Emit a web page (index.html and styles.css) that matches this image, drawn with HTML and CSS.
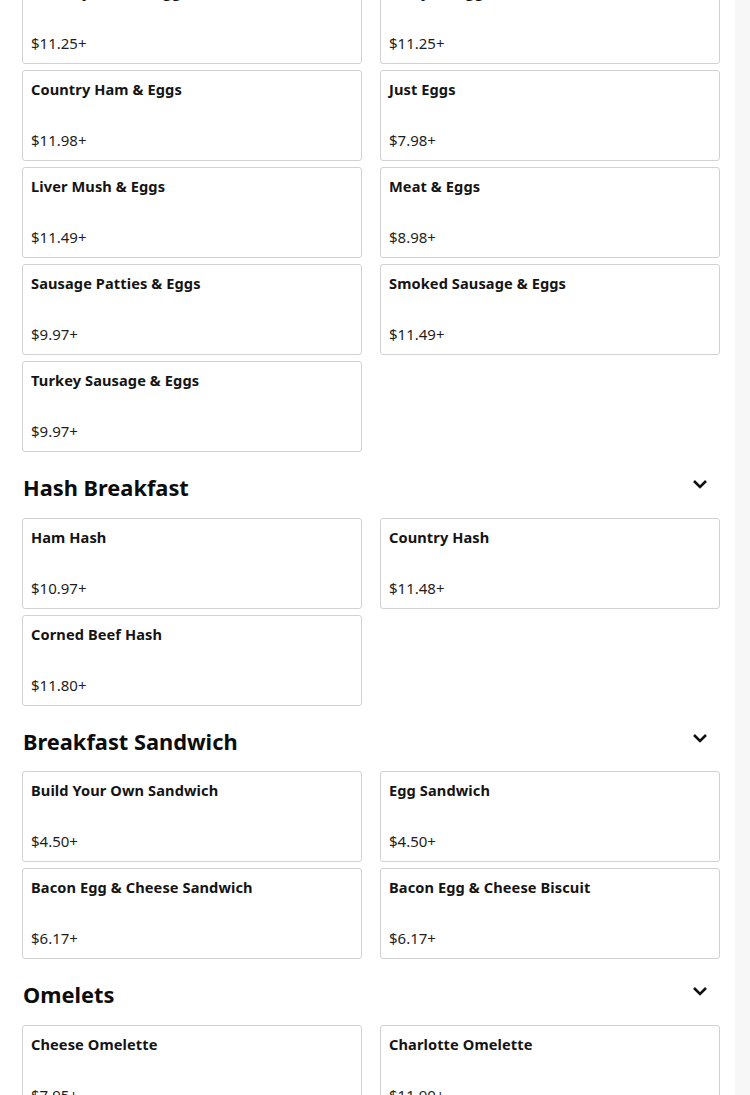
FILE: index.html
```html
<!DOCTYPE html>
<html lang="en">
<head>
<meta charset="utf-8">
<title>Menu</title>
<link rel="stylesheet" href="styles.css">
</head>
<body>
<div class="page">
  <main class="main">
    <section class="section">
      <div class="grid">
        <div class="card"><div class="name">Country Steak &amp; Eggs</div><div class="price">$11.25+</div></div>
        <div class="card"><div class="name">Ribeye &amp; Eggs</div><div class="price">$11.25+</div></div>
        <div class="card"><div class="name">Country Ham &amp; Eggs</div><div class="price">$11.98+</div></div>
        <div class="card"><div class="name">Just Eggs</div><div class="price">$7.98+</div></div>
        <div class="card"><div class="name">Liver Mush &amp; Eggs</div><div class="price">$11.49+</div></div>
        <div class="card"><div class="name">Meat &amp; Eggs</div><div class="price">$8.98+</div></div>
        <div class="card"><div class="name">Sausage Patties &amp; Eggs</div><div class="price">$9.97+</div></div>
        <div class="card"><div class="name">Smoked Sausage &amp; Eggs</div><div class="price">$11.49+</div></div>
        <div class="card"><div class="name">Turkey Sausage &amp; Eggs</div><div class="price">$9.97+</div></div>
      </div>
    </section>

    <section class="section">
      <div class="head">
        <h2 class="title">Hash Breakfast</h2>
        <svg class="chev" viewBox="0 0 16 10" width="16" height="10"><polyline points="2,2 8,8 14,2"/></svg>
      </div>
      <div class="grid">
        <div class="card"><div class="name">Ham Hash</div><div class="price">$10.97+</div></div>
        <div class="card"><div class="name">Country Hash</div><div class="price">$11.48+</div></div>
        <div class="card"><div class="name">Corned Beef Hash</div><div class="price">$11.80+</div></div>
      </div>
    </section>

    <section class="section">
      <div class="head">
        <h2 class="title">Breakfast Sandwich</h2>
        <svg class="chev" viewBox="0 0 16 10" width="16" height="10"><polyline points="2,2 8,8 14,2"/></svg>
      </div>
      <div class="grid">
        <div class="card"><div class="name">Build Your Own Sandwich</div><div class="price">$4.50+</div></div>
        <div class="card"><div class="name">Egg Sandwich</div><div class="price">$4.50+</div></div>
        <div class="card"><div class="name">Bacon Egg &amp; Cheese Sandwich</div><div class="price">$6.17+</div></div>
        <div class="card"><div class="name">Bacon Egg &amp; Cheese Biscuit</div><div class="price">$6.17+</div></div>
      </div>
    </section>

    <section class="section">
      <div class="head">
        <h2 class="title">Omelets</h2>
        <svg class="chev" viewBox="0 0 16 10" width="16" height="10"><polyline points="2,2 8,8 14,2"/></svg>
      </div>
      <div class="grid">
        <div class="card"><div class="name">Cheese Omelette</div><div class="price">$7.95+</div></div>
        <div class="card"><div class="name">Charlotte Omelette</div><div class="price">$11.90+</div></div>
      </div>
    </section>
  </main>
  <aside class="rail"></aside>
</div>
</body>
</html>
```

FILE: styles.css
```css
html, body {
  margin: 0;
  padding: 0;
  background: #fff;
  overflow: hidden;
}
body {
  font-family: "Noto Sans", "Open Sans", sans-serif;
  color: #111;
}
.page {
  display: flex;
  height: 1095px;
  overflow: hidden;
}
.main {
  width: 735px;
  box-sizing: border-box;
  padding: 0 15px 0 22px;
  margin-top: -27px;
}
.rail {
  width: 15px;
  background: #f7f7f7;
  flex: none;
}
.grid {
  display: grid;
  grid-template-columns: 340px 340px;
  column-gap: 18px;
  row-gap: 6px;
}
.card {
  box-sizing: border-box;
  height: 91px;
  border: 1px solid #d2d2d2;
  border-radius: 3px;
  padding: 7px 8px 9px;
  display: flex;
  flex-direction: column;
  justify-content: space-between;
}
.name {
  font-size: 14.6px;
  font-weight: 700;
  line-height: 22px;
  color: #141414;
  letter-spacing: 0.1px;
}
.price {
  font-size: 15px;
  line-height: 22px;
  color: #1e1e1e;
}
.head {
  display: flex;
  align-items: center;
  justify-content: space-between;
  padding: 20px 12px 0 1px;
  margin-bottom: 13.5px;
}
.title {
  margin: 0;
  font-size: 21.8px;
  line-height: 32px;
  font-weight: 700;
  color: #0c0c0c;
}
.chev {
  margin-bottom: 8px;
  fill: none;
  stroke: #111;
  stroke-width: 2.6;
}
```
